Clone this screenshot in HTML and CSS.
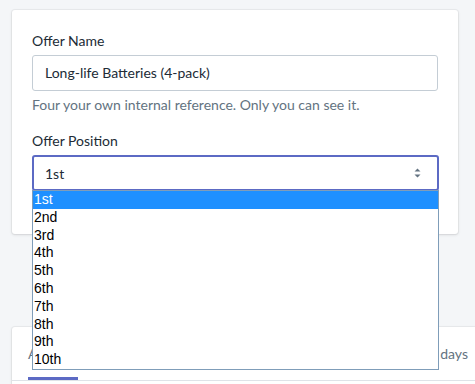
FILE: index.html
```html
<!DOCTYPE html>
<html>
<head>
<meta charset="utf-8">
<link rel="stylesheet" href="styles.css">
</head>
<body>
<div class="page">
  <div class="card card-form">
    <div class="field">
      <label class="label">Offer Name</label>
      <div class="input">Long-life Batteries (4-pack)</div>
      <div class="help">Four your own internal reference. Only you can see it.</div>
    </div>
    <div class="field field-select">
      <label class="label">Offer Position</label>
      <div class="select">
        <span>1st</span>
        <svg class="arrows" width="7" height="10" viewBox="0 0 7 10"><path d="M3.5 0.5 L6.5 3.5 H0.5 Z M3.5 9.5 L6.5 6.5 H0.5 Z" fill="#637381"/></svg>
      </div>
      <ul class="dropdown">
        <li class="active">1st</li>
        <li>2nd</li>
        <li>3rd</li>
        <li>4th</li>
        <li>5th</li>
        <li>6th</li>
        <li>7th</li>
        <li>8th</li>
        <li>9th</li>
        <li>10th</li>
      </ul>
    </div>
  </div>
  <div class="card card-tabs">
    <div class="tabs">
      <div class="tab tab-active">All</div>
      <div class="range">Last 30 days</div>
    </div>
  </div>
</div>
</body>
</html>
```

FILE: styles.css
```css
html, body {
  margin: 0;
  padding: 0;
  background: #f4f6f8;
  font-family: Lato, "Noto Sans", sans-serif;
  color: #212b36;
  overflow: hidden;
}
.page {
  padding: 10px 0 0 12px;
}
.card {
  background: #fff;
  border-radius: 3px;
  box-shadow: 0 0 0 1px rgba(63,63,68,.05), 0 1px 3px 0 rgba(63,63,68,.15);
}
.card-form {
  width: 406px;
  height: 184px;
  padding: 20px;
}
.field {
  display: flex;
  flex-direction: column;
}
.field-select {
  margin-top: 15px;
  position: relative;
}
.label {
  font-size: 14px;
  line-height: 20px;
  margin-bottom: 4px;
  padding-top: 1px;
}
.input {
  height: 34px;
  border: 1px solid #c4cdd5;
  border-radius: 3px;
  box-sizing: content-box;
  padding: 0 12px;
  font-size: 14px;
  line-height: 34px;
  width: 380px;
}
.help {
  margin-top: 4px;
  font-size: 14px;
  line-height: 20px;
  color: #637381;
}
.select {
  height: 32px;
  border: 2px solid #5c6ac4;
  border-radius: 3px;
  padding: 0 16px 0 11px;
  display: flex;
  align-items: center;
  justify-content: space-between;
  font-size: 14px;
  width: 376px;
}
.arrows {
  display: block;
}
.dropdown {
  position: absolute;
  left: 0;
  top: 60px;
  width: 405px;
  margin: 0;
  padding: 0;
  list-style: none;
  border: 1px solid #7f9db9;
  background: #fff;
  font-family: "Liberation Sans", Arial, sans-serif;
  font-size: 14px;
  color: #000;
  z-index: 5;
}
.dropdown li {
  height: 17.8px;
  line-height: 17.8px;
  padding-left: 1px;
}
.dropdown li.active {
  background: #1e90ff;
  color: #fff;
}
.card-tabs {
  margin-top: 93px;
  height: 57px;
  border-radius: 3px 0 0 0;
}
.tabs {
  display: flex;
  justify-content: space-between;
  align-items: center;
  padding: 0 7px 0 16px;
  height: 53px;
  border-bottom: 1px solid #dfe3e8;
}
.tab {
  position: relative;
  height: 53px;
  line-height: 53px;
  width: 50px;
  font-size: 14px;
  color: #637381;
}
.tab-active::after {
  content: "";
  position: absolute;
  left: 0;
  right: 0;
  bottom: 0;
  height: 3px;
  background: #5c6ac4;
}
.range {
  font-size: 14px;
  color: #637381;
}
```
